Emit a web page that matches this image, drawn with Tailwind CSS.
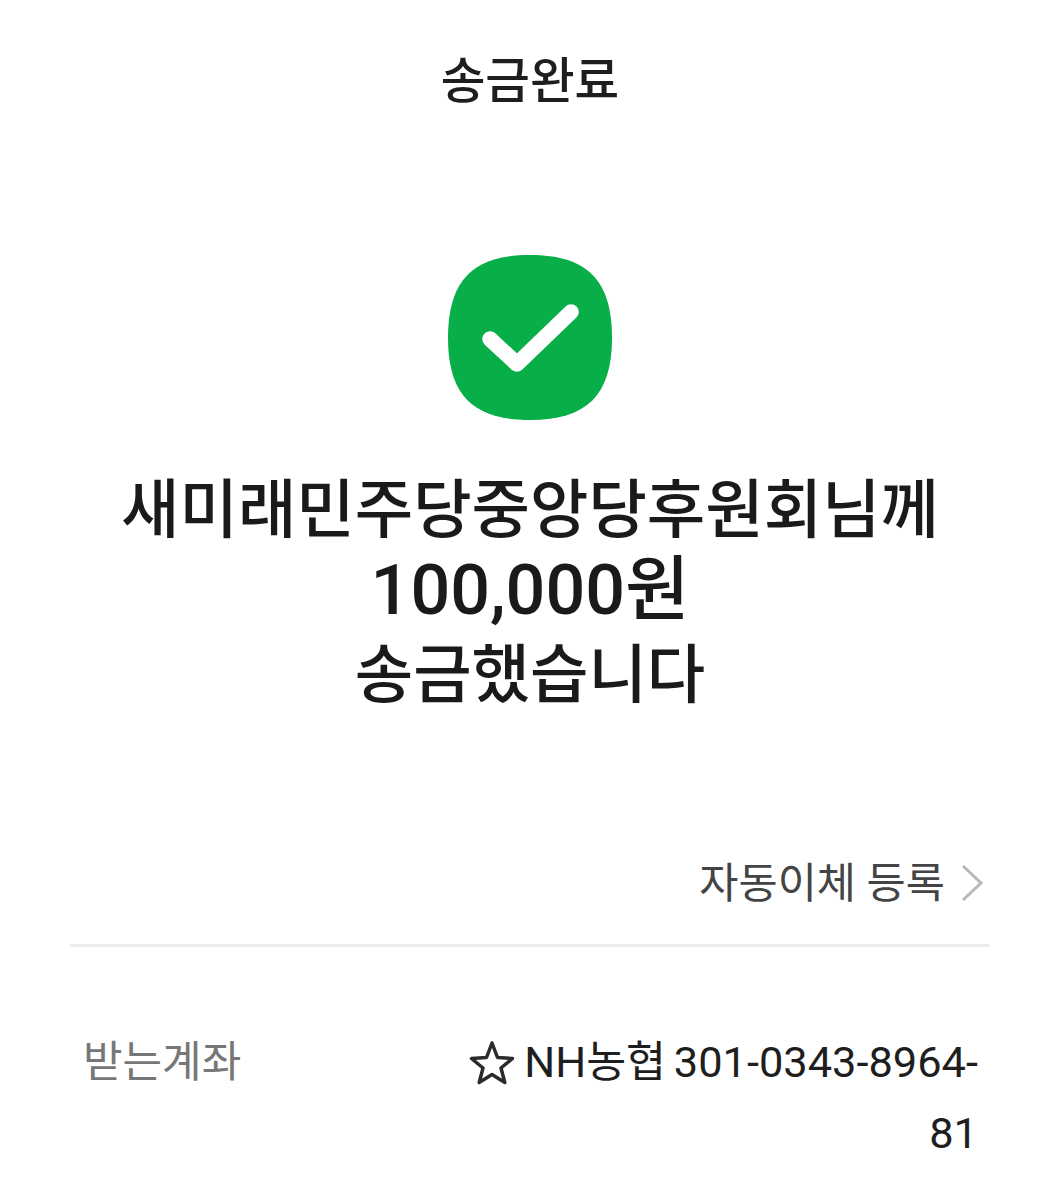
<!DOCTYPE html>
<html><head><meta charset="utf-8"><script src="https://cdn.jsdelivr.net/npm/@tailwindcss/browser@4"></script></head>
<body class="bg-white">
<div class="w-[1060px] h-[1200px] overflow-hidden bg-white font-['Roboto','Noto_Sans_CJK_KR',sans-serif] flex flex-col items-center">
<div class="pt-[49px] h-[255px] text-[48.5px] leading-[66px] font-medium text-[#1e1e1e]">송금완료</div>
<svg width="166" height="166" viewBox="0 0 166 166" class="block -ml-[1px]"><path d="M83 0C140 0 165 25 165 83C165 140 140 165 83 165C26 165 1 140 1 83C1 25 26 0 83 0Z" fill="#08ae48"/><path d="M43 84L70 109L124 57" fill="none" stroke="#fff" stroke-width="15.5" stroke-linecap="round" stroke-linejoin="round"/></svg>
<div class="mt-[49px] text-center text-[63.5px] leading-[82px] font-medium text-[#1a1a1a]"><div>새미래민주당중앙당후원회님께</div><div class="font-medium text-[70px] leading-[76px]">100,000원</div><div class="mt-[7px]">송금했습니다</div></div>
<div class="w-full mt-[136px] pr-[76px] flex justify-end items-center gap-[15px] text-[#444] text-[42.6px] leading-[60px]"><span>자동이체 등록</span><svg width="24" height="38" viewBox="0 0 24 38" class="block"><path d="M3 2L21 19L3 36" fill="none" stroke="#b8b8b8" stroke-width="3"/></svg></div>
<div class="w-[920px] h-[3px] mt-[31px] bg-[#ececec]"></div>
<div class="w-full pl-[83px] pr-[82px] mt-[80px] flex justify-between items-start text-[43.4px] leading-[71px]"><span class="text-[#777] text-[43px]">받는계좌</span><span class="w-[520px] text-right text-[#1e1e1e] [word-spacing:-3px]"><svg width="46" height="46" viewBox="0 0 46 46" class="inline-block align-[-9px] mr-[9px]"><path d="M23 3L28.5 17.5L43.5 18.5L32 28L35.8 42.5L23 34.5L10.2 42.5L14 28L2.5 18.5L17.5 17.5Z" fill="none" stroke="#2b2b2b" stroke-width="3.5" stroke-linejoin="round"/></svg>NH농협 301-0343-8964-81</span></div>
</div>
</body></html>
